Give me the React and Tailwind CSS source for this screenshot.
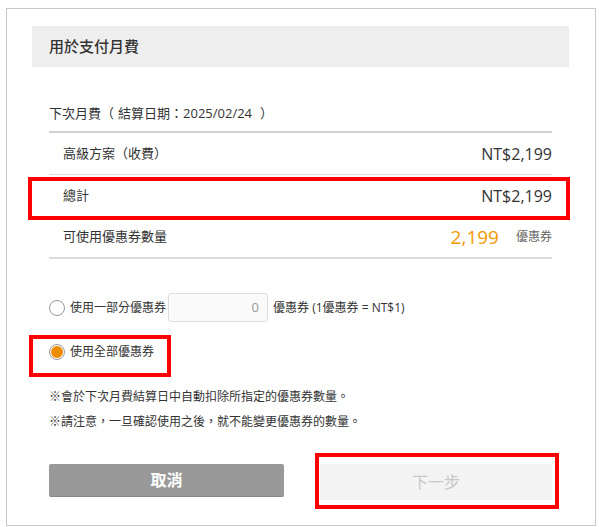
export default function App() {
  const font = { fontFamily: '"Open Sans", "Noto Sans CJK TC", sans-serif' };
  return (
    <div className="w-[599px] h-[527px] bg-white relative overflow-hidden text-[#333]" style={font}>
      <div className="absolute left-[6px] top-[8px] w-[590px] h-[518px] border border-[#c8c8c8]"></div>
      <div className="relative pt-[26px] pl-[32px] w-[569px]">
        <div className="h-[41px] bg-[#eeeeee] flex items-center pl-[17px] text-[15px] font-medium text-[#333]">
          用於支付月費
        </div>
        <div className="px-[17px]">
          <div className="mt-[36px] pb-[8px] text-[13px] leading-[20px] border-b-2 border-[#d0d0d0]">
            下次月費<span className="mr-[4px]">（</span>結算日期：2025/02/24<span className="ml-[8px]">）</span>
          </div>
          <div className="h-[42px] flex items-center justify-between pl-[14px] border-b border-[#dcdcdc]">
            <span className="text-[13px]">高級方案（收費）</span>
            <span className="text-[16px]">NT$2,199</span>
          </div>
          <div className="h-[42px] flex items-center justify-between pl-[14px]">
            <span className="text-[13px]">總計</span>
            <span className="text-[16px]">NT$2,199</span>
          </div>
          <div className="h-[42px] flex items-center justify-between pl-[14px] border-b-2 border-[#dcdcdc]">
            <span className="text-[13px]">可使用優惠券數量</span>
            <span className="flex items-center">
              <span className="text-[19px] text-[#f39800]">2,199</span>
              <span className="text-[12px] text-[#666] ml-[17px]">優惠券</span>
            </span>
          </div>
          <div className="mt-[34px] h-[29px] flex items-center text-[12px]">
            <span className="w-[16px] h-[16px] rounded-full border border-[#999] bg-white shrink-0"></span>
            <span className="ml-[5px]">使用一部分優惠券</span>
            <span className="ml-[2px] w-[100px] h-[29px] border border-[#ddd] rounded-[3px] bg-[#fafafa] flex items-center justify-end pr-[8px] text-[#999] text-[13px]">0</span>
            <span className="ml-[5px]">優惠券 (1優惠券 = NT$1)</span>
          </div>
          <div className="mt-[20px] h-[20px] flex items-center text-[12px]">
            <span className="w-[16px] h-[16px] rounded-full border border-[#999] bg-white shrink-0 flex items-center justify-center">
              <span className="w-[12px] h-[12px] rounded-full bg-[#f08c00]"></span>
            </span>
            <span className="ml-[5px]">使用全部優惠券</span>
          </div>
          <div className="mt-[22px] text-[12px] leading-[25px]">
            <div>※會於下次月費結算日中自動扣除所指定的優惠券數量。</div>
            <div>※請注意，一旦確認使用之後，就不能變更優惠券的數量。</div>
          </div>
          <div className="mt-[30px] flex justify-between">
            <button className="w-[235px] h-[33px] bg-[#999999] border-b border-[#888] rounded-[2px] text-white text-[16px] font-bold flex items-center justify-center">
              取消
            </button>
            <button className="w-[232px] h-[36px] bg-[#f3f3f3] text-[#c8c8c8] text-[16px] flex items-center justify-center">
              下一步
            </button>
          </div>
        </div>
      </div>
      <div className="absolute left-[28px] top-[177px] w-[542px] h-[43px] border-[4px] border-[#ff0000]"></div>
      <div className="absolute left-[29px] top-[335px] w-[142px] h-[42px] border-[4px] border-[#ff0000]"></div>
      <div className="absolute left-[315px] top-[453px] w-[244px] h-[56px] border-[4px] border-[#ff0000]"></div>
    </div>
  );
}
